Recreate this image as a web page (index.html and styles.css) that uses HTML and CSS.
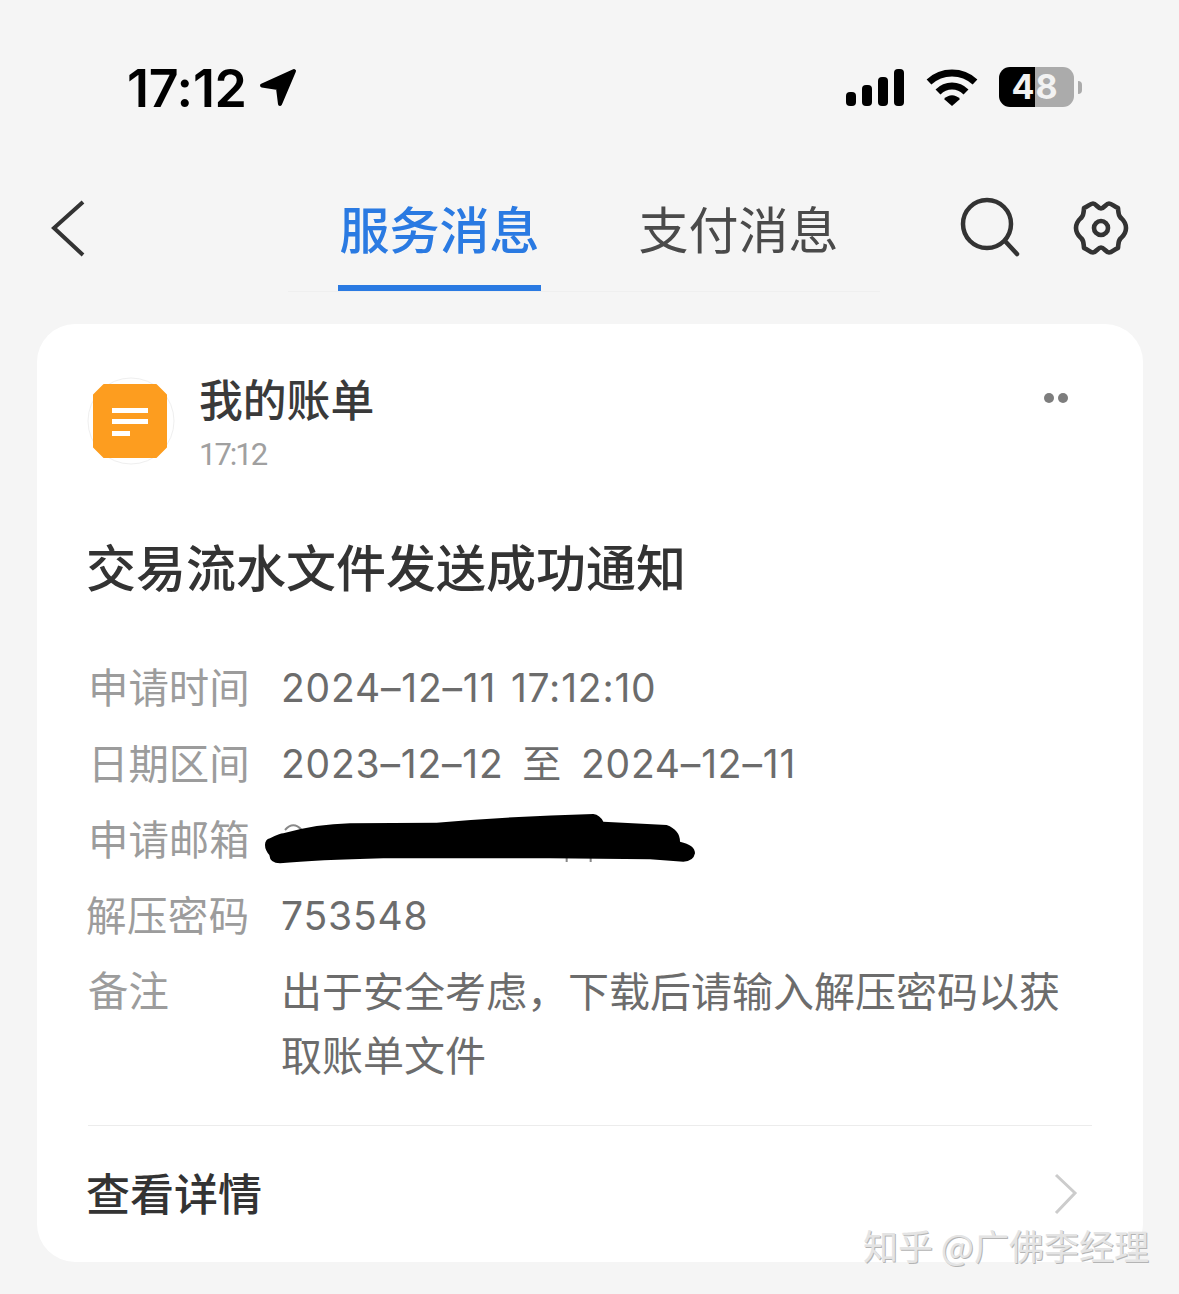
FILE: index.html
```html
<!DOCTYPE html>
<html lang="zh-CN">
<head>
<meta charset="utf-8">
<title>服务消息</title>
<link rel="stylesheet" href="styles.css">
</head>
<body>
<div class="screen">
  <header class="status">
    <div class="status-left">
      <span class="clock">17:12</span>
      <svg class="loc" width="40" height="40" viewBox="0 0 40 40"><path d="M36 4 L4 18.5 L20 21 L22 37 Z" fill="#000" stroke="#000" stroke-width="4" stroke-linejoin="round"/></svg>
    </div>
    <div class="status-right">
      <svg class="signal" width="58" height="38" viewBox="0 0 58 38"><rect x="0" y="23" width="10" height="14" rx="4"/><rect x="16" y="16" width="10" height="21" rx="4"/><rect x="32" y="8" width="10" height="29" rx="4"/><rect x="48" y="0" width="10" height="37" rx="4"/></svg>
      <svg class="wifi" width="52" height="38" viewBox="0 0 52 38"><path d="M3 13 C16 1 36 1 49 13" fill="none" stroke="#000" stroke-width="7"/><path d="M12 23 C20 15 32 15 40 23" fill="none" stroke="#000" stroke-width="7"/><path d="M26 37 L18 30 C23 25 29 25 34 30 Z" fill="#000"/></svg>
      <div class="battery"><span class="battery-num">48</span></div>
      <span class="battery-nub"></span>
    </div>
  </header>

  <nav class="nav">
    <svg class="back" width="36" height="58" viewBox="0 0 36 58"><path d="M32 3 L3 29 L32 56" fill="none" stroke="#333" stroke-width="4"/></svg>
    <div class="tabs">
      <div class="tab tab-active">服务消息</div>
      <div class="tab">支付消息</div>
    </div>
    <svg class="search" width="62" height="62" viewBox="0 0 62 62"><circle cx="28" cy="28" r="24" fill="none" stroke="#333" stroke-width="4.5"/><path d="M46 45 L58 58" stroke="#333" stroke-width="4.5" stroke-linecap="round"/></svg>
    <svg class="gear" width="60" height="60" viewBox="-30 -30 60 60"><path d="M0 -19.5 C3 -19.5 5 -24.5 8 -24.5 C11 -24.5 13.5 -21 17 -20 C17.5 -16 17 -13 19.5 -10.5 C22 -8 25 -6 25 0 C25 6 22 8 19.5 10.5 C17 13 17.5 16 17 20 C13.5 21 11 24.5 8 24.5 C5 24.5 3 19.5 0 19.5 C-3 19.5 -5 24.5 -8 24.5 C-11 24.5 -13.5 21 -17 20 C-17.5 16 -17 13 -19.5 10.5 C-22 8 -25 6 -25 0 C-25 -6 -22 -8 -19.5 -10.5 C-17 -13 -17.5 -16 -17 -20 C-13.5 -21 -11 -24.5 -8 -24.5 C-5 -24.5 -3 -19.5 0 -19.5 Z" fill="none" stroke="#333" stroke-width="4.6" stroke-linejoin="round"/><circle cx="0" cy="0" r="7" fill="none" stroke="#333" stroke-width="4.6"/></svg>
  </nav>

  <main class="card">
    <div class="card-head">
      <svg class="app-icon" width="88" height="88" viewBox="0 0 88 88"><circle cx="44" cy="44" r="43" fill="#fff" stroke="#efefef" stroke-width="1"/><path d="M17 8 H69 L79 18 V70 L69 80 H17 L7 70 V18 Z" fill="#fd9d1f" stroke="#fd9d1f" stroke-width="2" stroke-linejoin="round"/><rect x="25" y="31" width="36" height="5" fill="#fff"/><rect x="25" y="42" width="36" height="5" fill="#fff"/><rect x="25" y="54" width="18" height="5" fill="#fff"/></svg>
      <div class="head-text">
        <div class="app-name">我的账单</div>
        <div class="app-time">17:12</div>
      </div>
      <div class="more"><span class="dot"></span><span class="dot"></span></div>
    </div>

    <h1 class="title">交易流水文件发送成功通知</h1>

    <dl class="rows">
      <div class="row"><dt class="label">申请时间</dt><dd class="value">2024–12–11 17:12:10</dd></div>
      <div class="row"><dt class="label">日期区间</dt><dd class="value">2023–12–12 <span class="to">至</span> 2024–12–11</dd></div>
      <div class="row"><dt class="label">申请邮箱</dt><dd class="value value-hidden">
        <svg class="scribble" width="460" height="80" viewBox="0 0 1380 240"><path d="M105 90 Q130 62 155 90 M950 170 V186 M1022 170 V186" fill="none" stroke="#888" stroke-width="6"/><path d="M60 115 Q90 100 100 100 Q200 72 300 70 L560 68 Q800 48 1030 42 Q1050 45 1060 65 L1250 75 Q1290 90 1290 125 Q1335 135 1335 160 Q1330 185 1300 185 L1200 178 L900 175 L400 175 Q200 180 90 190 Q60 190 58 165 Q45 150 45 135 Q45 118 60 115 Z" fill="#000"/></svg>
      </dd></div>
      <div class="row"><dt class="label label-wide">解压密码</dt><dd class="value">753548</dd></div>
      <div class="row row-note"><dt class="label">备注</dt><dd class="value note">出于安全考虑，下载后请输入解压密码以获取账单文件</dd></div>
    </dl>

    <div class="card-foot">
      <span class="detail">查看详情</span>
      <svg class="chev" width="24" height="42" viewBox="0 0 24 42"><path d="M2 2 L21 20 L2 40" fill="none" stroke="#ccc" stroke-width="3"/></svg>
    </div>
  </main>
  <div class="watermark">知乎 @广佛李经理</div>
</div>
</body>
</html>
```

FILE: styles.css
```css
* { box-sizing: border-box; }
html, body { margin: 0; padding: 0; }
body {
  background: #f5f5f5;
  font-family: "Noto Sans CJK SC", "Noto Sans", sans-serif;
  color: #333;
}
.screen {
  position: relative;
  width: 1179px;
  height: 1294px;
  overflow: hidden;
}
.status {
  height: 176px;
  display: flex;
  justify-content: space-between;
  padding: 68px 97px 0 127px;
}
.status-left { display: flex; align-items: flex-start; height: 44px; }
.clock {
  font-family: Inter, Roboto, sans-serif;
  font-weight: 600;
  font-size: 52px;
  line-height: 42px;
  color: #000;
  letter-spacing: -0.3px;
}
.loc { margin: -1px 0 0 11px; }
.status-right { display: flex; align-items: flex-start; margin-top: -1px; }
.signal { margin-top: 2px; }
.signal rect { fill: #000; }
.wifi { margin: 2px 0 0 22px; }
.battery {
  margin-left: 21px;
  width: 75px;
  height: 40px;
  padding-right: 3px;
  border-radius: 11px;
  background: linear-gradient(90deg, #000 0, #000 36px, #ababab 36px);
  display: flex;
  align-items: center;
  justify-content: center;
}
.battery-num {
  font-family: Inter, Roboto, sans-serif;
  font-weight: 700;
  font-size: 34px;
  letter-spacing: 1px;
  color: #f2f2f2;
  line-height: 40px;
}
.battery-nub {
  width: 4px;
  height: 13px;
  margin: 14px 0 0 4px;
  border-radius: 0 4px 4px 0;
  background: #ababab;
}

.nav {
  position: relative;
  height: 148px;
  display: flex;
  align-items: flex-start;
}
.nav::after {
  content: "";
  position: absolute;
  left: 288px;
  top: 115px;
  width: 592px;
  height: 1px;
  background: #efefef;
}
.back { flex: none; margin: 23px 0 0 51px; }
.tabs {
  flex: none;
  position: relative;
  z-index: 1;
  display: flex;
  gap: 96px;
  margin-left: 251px;
  height: 115px;
  width: 505px;
}
.tab {
  width: 203px;
  height: 115px;
  padding-top: 17px;
  font-size: 50px;
  line-height: 68px;
  text-align: center;
  color: #4a4a4a;
  font-weight: 400;
  white-space: nowrap;
}
.tab-active {
  color: #2a7ae2;
  font-weight: 500;
  border-bottom: 6px solid #2a7ae2;
}
.search { flex: none; margin: 20px 0 0 116px; }
.gear { flex: none; margin: 22px 0 0 50px; }

.card {
  width: 1106px;
  height: 938px;
  margin-left: 37px;
  padding: 53px 51px 0;
  background: #fff;
  border-radius: 38px;
}
.card-head { display: flex; align-items: flex-start; height: 88px; }
.app-icon { flex: none; margin-left: -1px; }
.head-text { margin-left: 24px; flex: 1; }
.app-name {
  font-size: 43.8px;
  line-height: 48px;
  color: #3a3a3a;
  margin-top: -3px;
  font-weight: 500;
}
.app-time {
  font-family: Roboto, sans-serif;
  font-size: 31px;
  letter-spacing: -2px;
  line-height: 40px;
  color: #a0a0a0;
  margin-top: 13px;
}
.more { display: flex; gap: 4px; margin: 16px 24px 0 0; }
.dot { width: 10px; height: 10px; border-radius: 50%; background: #7d7d7d; }

.title {
  margin: 65px 0 0 -2px;
  font-size: 50px;
  line-height: 70px;
  font-weight: 500;
  color: #333;
  white-space: nowrap;
}
.rows { margin: 50px 0 0; padding: 0; }
.row {
  display: grid;
  grid-template-columns: 194px 1fr;
  height: 76px;
  font-size: 40.4px;
  line-height: 76px;
}
.label { color: #9c9c9c; line-height: 71px; white-space: nowrap; }
.label-wide { margin-left: -2px; letter-spacing: 0.5px; }
.value {
  margin: 0 0 0 -1px;
  color: #6c6c6c;
  font-family: Inter, "Noto Sans CJK SC", sans-serif;
  font-size: 39px;
  letter-spacing: 0.8px;
  word-spacing: 3px;
  white-space: nowrap;
}
.to { margin: 0 4px; }
.value-hidden { position: relative; }
.scribble { position: absolute; left: -31px; top: -2px; }
.row-note { height: 128px; margin-top: 3px; line-height: 64px; }
.row-note .label { line-height: 64px; }
.note {
  white-space: normal;
  font-family: "Noto Sans CJK SC", sans-serif;
  font-size: 41px;
  letter-spacing: 0;
  word-spacing: 0;
  width: 800px;
}
.card-foot {
  margin-top: 40px;
  border-top: 1px solid #ececec;
  height: 137px;
  display: flex;
  align-items: center;
  justify-content: space-between;
  padding: 0 14px 4px 0;
}
.detail { font-size: 44px; font-weight: 500; color: #333; margin-left: -2px; }
.chev { flex: none; margin-top: 4px; }
.watermark {
  position: absolute;
  left: 863px;
  top: 1222px;
  font-size: 35px;
  line-height: 46px;
  color: #e4e4e4;
  text-shadow: 1px 1px 0 #b4b4b4;
  white-space: nowrap;
}
```
